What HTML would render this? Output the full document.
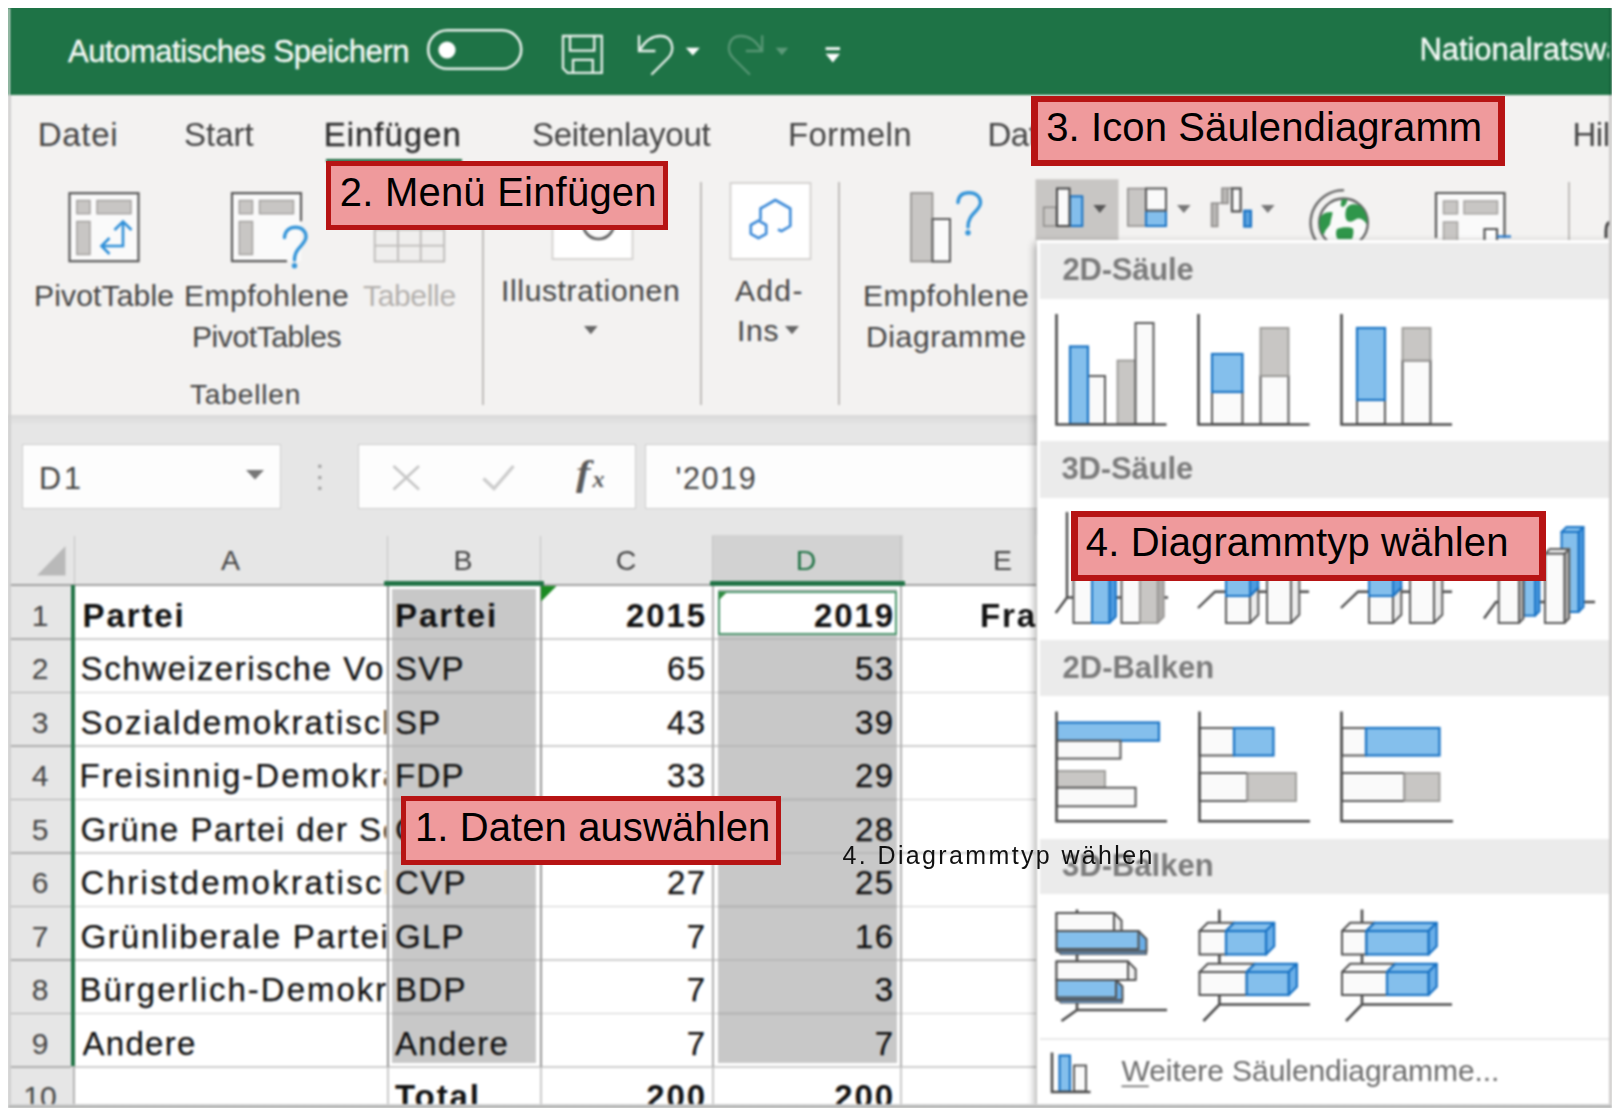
<!DOCTYPE html>
<html lang="de">
<head>
<meta charset="utf-8">
<title>Excel – Säulendiagramm einfügen</title>
<style>
html,body{margin:0;padding:0;background:#fff;}
body{width:1620px;height:1118px;overflow:hidden;position:relative;font-family:"Liberation Sans",sans-serif;}
#app{position:absolute;left:0;top:0;width:1612px;height:1108px;overflow:hidden;background:#f3f2f1;}
#shot{position:absolute;left:0;top:0;width:1612px;height:1108px;overflow:hidden;filter:blur(0.8px);}
.a{position:absolute;}
.t{position:absolute;white-space:nowrap;z-index:5;font-family:"Liberation Sans",sans-serif;}
svg{position:absolute;overflow:visible;}
.hl{position:absolute;left:10px;width:1026px;height:1px;background:#d6d6d6;}
.vl{position:absolute;width:1px;background:#d6d6d6;}
.rbox{position:absolute;box-sizing:border-box;background:#ef9a9c;border-style:solid;border-color:#b71414;z-index:20;}
.ph{position:absolute;left:1040px;width:569px;background:#ebebeb;z-index:11;}
</style>
</head>
<body>
<div id="app">
<div id="shot">

<!-- ===== title bar ===== -->
<div class="a" style="left:0;top:0;width:1612px;height:94.7px;background:#1e7346;"></div>
<svg style="left:0;top:0" width="1611" height="95" fill="none" stroke="#e9f1ec" stroke-width="2.3" stroke-linejoin="round" stroke-linecap="round">
<!-- autosave toggle -->
<rect x="428.2" y="30.2" width="93" height="38.6" rx="19.3" stroke-width="2.6"/>
<circle cx="447" cy="50" r="8.6" fill="#fff" stroke="none"/>
<!-- save -->
<path d="M563 36H601.8V72.8H567.5L563 68.3Z" stroke-linejoin="miter"/>
<path d="M570 36V50.6H594.3V36" stroke-linejoin="miter"/>
<path d="M573 72.8V59.8H592.8V72.8" stroke-linejoin="miter"/>
<!-- undo -->
<path d="M639 35.2V51H655.4" stroke-linejoin="miter" stroke-linecap="butt"/>
<path d="M640 50C645 41 652 36 660.5 36C672.5 36 676 50 667.5 58.5L652 74"/>
<path d="M685.8 47.7H699.8L692.8 55.4Z" fill="#fff" stroke="none"/>
<!-- redo (disabled) -->
<g opacity="0.28">
<path d="M762.2 35.2V51H745.8" stroke-linejoin="miter" stroke-linecap="butt"/>
<path d="M761.2 50C756.2 41 749.2 36 740.7 36C728.7 36 725.2 50 733.7 58.5L749.2 74"/>
<path d="M775.6 47.7H788.2L781.9 55.2Z" fill="#fff" stroke="none"/>
</g>
<!-- customize QAT -->
<path d="M825.6 47.3H840V50H825.6Z M825.6 53.8H840L832.8 62.6Z" fill="#fff" stroke="none"/>
</svg>

<!-- ===== ribbon ===== -->
<div class="a" style="left:0;top:94.7px;width:1612px;height:321px;background:#f3f2f1;"></div>
<!-- active tab underline -->
<div class="a" style="left:326px;top:159.2px;width:136px;height:3px;background:#1e6b41;"></div>
<!-- group separators -->
<div class="a" style="left:482px;top:182px;width:1.5px;height:223px;background:#bfbdbb;"></div>
<div class="a" style="left:700px;top:182px;width:1.5px;height:223px;background:#bfbdbb;"></div>
<div class="a" style="left:838px;top:182px;width:1.5px;height:223px;background:#bfbdbb;"></div>
<div class="a" style="left:1568px;top:182px;width:1.5px;height:60px;background:#bfbdbb;"></div>
<svg style="left:0;top:0" width="1611" height="420" fill="none"><rect x="69.5" y="193.2" width="69" height="68" fill="#fafafa" stroke="#595959" stroke-width="2.2"/><rect x="76.8" y="200.5" width="13.2" height="13.2" fill="#c8c6c4" stroke="#a19f9d" stroke-width="1.4"/><rect x="97.0" y="200.5" width="34" height="13.2" fill="#c8c6c4" stroke="#a19f9d" stroke-width="1.4"/><rect x="76.8" y="221.5" width="13.2" height="33" fill="#c8c6c4" stroke="#a19f9d" stroke-width="1.4"/><path d="M123 222.5V246H101.5 M114.5 230L123 221.5L131.5 230 M109.5 238L101.5 246L109.5 254" stroke="#2f8fd8" stroke-width="2.6" fill="none"/><rect x="232" y="193.2" width="69" height="68" fill="#fafafa"/><path d="M301 221.2V193.2H232V261.2H287" fill="none" stroke="#595959" stroke-width="2.2"/><rect x="239.3" y="200.5" width="13.2" height="13.2" fill="#c8c6c4" stroke="#a19f9d" stroke-width="1.4"/><rect x="259.5" y="200.5" width="34" height="13.2" fill="#c8c6c4" stroke="#a19f9d" stroke-width="1.4"/><rect x="239.3" y="221.5" width="13.2" height="33" fill="#c8c6c4" stroke="#a19f9d" stroke-width="1.4"/><path d="M284.5 237.5C285 230.5 289.5 227.3 295.5 227.3C302 227.3 306 231.3 306 236.8C306 245 294.5 247 294.5 260" stroke="#3595d9" stroke-width="3.4" fill="none" stroke-linecap="round"/><circle cx="294.5" cy="265.8" r="2.7" fill="#3595d9"/><rect x="374.7" y="200" width="69.5" height="61.5" fill="#efeeed" stroke="#bebcba" stroke-width="1.9"/><path d="M374.7 245.6H444.2 M374.7 229.5H444.2 M398 200V261.5 M420.7 200V261.5" stroke="#bebcba" stroke-width="1.9"/><rect x="552.5" y="183" width="80" height="76" fill="#fff" stroke="#d2d0ce" stroke-width="1.8"/><circle cx="598.5" cy="223.5" r="15.5" stroke="#5c5c5c" stroke-width="2.6" fill="#fafafa"/><rect x="730.5" y="183" width="80" height="76" fill="#fff" stroke="#d2d0ce" stroke-width="1.8"/><path d="M760.5 220V208.5L775.3 200L790.3 208.5V226L781.5 231.2L778 229.5" stroke="#3c8ad8" stroke-width="2.6" stroke-linejoin="round"/><path d="M758.5 220.6L766.2 225V233.8L758.5 238.2L750.8 233.8V225Z" stroke="#3c8ad8" stroke-width="2.6" stroke-linejoin="round"/><rect x="911" y="193" width="21.5" height="68.5" fill="#c8c6c4" stroke="#8f8d8b" stroke-width="1.6"/><rect x="932.5" y="219" width="17.5" height="42.5" fill="#fafafa" stroke="#595959" stroke-width="2"/><path d="M958 202.5C958.5 195.5 963 192.8 969 192.8C976 192.8 980.5 196.8 980.5 202.5C980.5 211 968 213 968 227" stroke="#3595d9" stroke-width="3.4" fill="none" stroke-linecap="round"/><circle cx="968" cy="232.8" r="2.7" fill="#3595d9"/><rect x="1035.5" y="179.3" width="83" height="61" fill="#c8c6c4"/><rect x="1043.7" y="207.3" width="12.5" height="18.7" fill="#c8c6c4" stroke="#8f8d8b" stroke-width="1.5"/><rect x="1070" y="196.3" width="12.3" height="29.7" fill="#83beec" stroke="#1a73c4" stroke-width="2"/><rect x="1057" y="188.5" width="12.5" height="37.5" fill="#fafafa" stroke="#444" stroke-width="2"/><path d="M1093.3 205H1106.3L1099.8 213Z" fill="#555"/><rect x="1127.8" y="188.5" width="18" height="37.5" fill="#c8c6c4" stroke="#8f8d8b" stroke-width="1.5"/><rect x="1146" y="210.5" width="20" height="15.5" fill="#83beec" stroke="#1a73c4" stroke-width="2"/><rect x="1146" y="188.5" width="20" height="22" fill="#fafafa" stroke="#555" stroke-width="2"/><path d="M1177 205H1190.6L1183.8 213Z" fill="#777"/><rect x="1211.6" y="203.2" width="6" height="23.2" fill="#b9b7b5" stroke="#8f8d8b" stroke-width="1.6"/><rect x="1222" y="188.2" width="6" height="15.2" fill="#b9b7b5" stroke="#8f8d8b" stroke-width="1.6"/><path d="M1217.6 203.3H1222 M1228 188.2H1232" stroke="#8f8d8b" stroke-width="1.6"/><rect x="1232" y="188.4" width="8.6" height="23" fill="#fafafa" stroke="#555" stroke-width="2.3"/><rect x="1244.3" y="210.8" width="6.6" height="15.7" fill="#5ba3e0" stroke="#1a73c4" stroke-width="2.3"/><path d="M1261 205H1274.6L1267.8 213Z" fill="#777"/><path d="M1343 190.2A32.6 32.6 0 0 0 1315.5 240" stroke="#6f6f6f" stroke-width="2.6" fill="none" stroke-linecap="round"/>
<circle cx="1343.5" cy="222.8" r="24.3" fill="#fafafa" stroke="#666" stroke-width="2.4"/>
<g fill="#2f964a">
<path d="M1341.5 199.6L1347.6 199.2L1346.2 204L1343.4 207L1340.6 206Z"/>
<path d="M1346 210C1347 205 1352 203.5 1357 204.6C1362 206 1366 212 1367.2 219L1366.8 224.5C1364 219.5 1360 217.8 1357 218.8C1354 220.2 1352 222.2 1349 221.6C1345.5 221 1344.6 215 1346 210Z"/>
<path d="M1323 214.2C1326 212.2 1331 211.6 1332.6 212.6C1332.2 216 1330.6 220 1330.2 224C1329.2 227 1325.4 229 1324.6 233L1322.6 235C1319.4 229 1318.8 222 1320.2 217Z"/>
<path d="M1337 229C1342 226.6 1350 226.6 1353 228.6C1354 232 1353.2 236 1352 239L1337.5 239C1335.6 236 1335.6 231.5 1337 229Z"/>
</g>
<path d="M1436 238V193H1504.5V238" fill="#fafafa" stroke="#555" stroke-width="2.2"/><rect x="1443.5" y="201" width="14" height="12.8" fill="#c8c6c4" stroke="#a19f9d" stroke-width="1.4"/><rect x="1464" y="201" width="33.5" height="12.8" fill="#c8c6c4" stroke="#a19f9d" stroke-width="1.4"/><rect x="1443.5" y="222" width="14" height="20" fill="#c8c6c4" stroke="#a19f9d" stroke-width="1.4"/><path d="M1484.5 240V229H1497V240" fill="#fff" stroke="#555" stroke-width="2.2"/><path d="M1497 236.5H1511" stroke="#2f7fd0" stroke-width="2.4"/><path d="M1611 222C1606.5 222 1606 226 1606 231V238" stroke="#444" stroke-width="3" fill="none"/></svg>

<!-- ribbon bottom shadow + formula bar background -->
<div class="a" style="left:0;top:415px;width:1612px;height:120px;background:#e6e6e6;"></div>
<div class="a" style="left:0;top:415px;width:1612px;height:10px;background:linear-gradient(#d9d9d9,#e6e6e6);"></div>

<!-- name box -->
<div class="a" style="left:22px;top:444px;width:259px;height:65px;box-sizing:border-box;background:#fdfdfd;border:1.5px solid #cdcdcd;"></div>
<!-- buttons box -->
<div class="a" style="left:358px;top:444px;width:278px;height:65px;box-sizing:border-box;background:#fdfdfd;border:1.5px solid #cdcdcd;"></div>
<!-- formula input -->
<div class="a" style="left:645px;top:444px;width:400px;height:65px;box-sizing:border-box;background:#fdfdfd;border:1.5px solid #cdcdcd;"></div>
<svg style="left:0;top:420" width="1040" height="115" fill="none"><path d="M246 50H264L255 59.5Z" fill="#777"/><rect x="318.2" y="44.7" width="3.2" height="3.2" fill="#a2a2a2"/><rect x="318.2" y="56.000000000000014" width="3.2" height="3.2" fill="#a2a2a2"/><rect x="318.2" y="66.7" width="3.2" height="3.2" fill="#a2a2a2"/><path d="M393.5 46L419 69.5 M419 46L393.5 69.5" stroke="#c6c6c6" stroke-width="2.6"/><path d="M483.5 58.5L494 68.5L513.5 46" stroke="#cdcdcd" stroke-width="3.4"/></svg><svg style="left:0;top:300" width="900" height="60"><path d="M584 26H597.6L590.8 34.2Z M785 26H799L792 34.2Z" fill="#666"/></svg>

<!-- ===== sheet ===== -->
<div class="a" style="left:0;top:535px;width:1036px;height:573px;background:#fff;"></div>
<!-- column header strip -->
<div class="a" style="left:0;top:535px;width:1036px;height:50px;background:#e6e6e6;"></div>
<!-- selected D header -->
<div class="a" style="left:712px;top:535px;width:190.5px;height:48px;background:#d2d2d2;"></div>
<!-- row header strip -->
<div class="a" style="left:0;top:585px;width:73.5px;height:523px;background:#e6e6e6;"></div>
<div class="a" style="left:10px;top:584px;width:1026px;height:2.2px;background:#a2a2a2;"></div>
<div class="a" style="left:74px;top:536px;width:1px;height:48px;background:#c2c2c2;"></div>
<div class="a" style="left:387px;top:536px;width:1px;height:48px;background:#c2c2c2;"></div>
<div class="a" style="left:540px;top:536px;width:1px;height:48px;background:#c2c2c2;"></div>
<div class="a" style="left:712px;top:536px;width:1px;height:48px;background:#c2c2c2;"></div>
<div class="a" style="left:900px;top:536px;width:1px;height:48px;background:#c2c2c2;"></div>
<div class="a" style="left:71px;top:638.0px;width:965px;height:1.6px;background:#cecece;"></div>
<div class="a" style="left:10px;top:638.0px;width:61px;height:1.8px;background:#adadad;"></div>
<div class="a" style="left:71px;top:691.5px;width:965px;height:1.6px;background:#cecece;"></div>
<div class="a" style="left:10px;top:691.5px;width:61px;height:1.8px;background:#adadad;"></div>
<div class="a" style="left:71px;top:745.0px;width:965px;height:1.6px;background:#cecece;"></div>
<div class="a" style="left:10px;top:745.0px;width:61px;height:1.8px;background:#adadad;"></div>
<div class="a" style="left:71px;top:798.5px;width:965px;height:1.6px;background:#cecece;"></div>
<div class="a" style="left:10px;top:798.5px;width:61px;height:1.8px;background:#adadad;"></div>
<div class="a" style="left:71px;top:852.0px;width:965px;height:1.6px;background:#cecece;"></div>
<div class="a" style="left:10px;top:852.0px;width:61px;height:1.8px;background:#adadad;"></div>
<div class="a" style="left:71px;top:905.5px;width:965px;height:1.6px;background:#cecece;"></div>
<div class="a" style="left:10px;top:905.5px;width:61px;height:1.8px;background:#adadad;"></div>
<div class="a" style="left:71px;top:959.0px;width:965px;height:1.6px;background:#cecece;"></div>
<div class="a" style="left:10px;top:959.0px;width:61px;height:1.8px;background:#adadad;"></div>
<div class="a" style="left:71px;top:1012.5px;width:965px;height:1.6px;background:#cecece;"></div>
<div class="a" style="left:10px;top:1012.5px;width:61px;height:1.8px;background:#adadad;"></div>
<div class="a" style="left:71px;top:1066.0px;width:965px;height:1.6px;background:#cecece;"></div>
<div class="a" style="left:10px;top:1066.0px;width:61px;height:1.8px;background:#adadad;"></div>
<div class="a" style="left:387px;top:586px;width:1.6px;height:522px;background:#cacaca;"></div>
<div class="a" style="left:540px;top:586px;width:1.6px;height:522px;background:#cacaca;"></div>
<div class="a" style="left:712px;top:586px;width:1.6px;height:522px;background:#cacaca;"></div>
<div class="a" style="left:900px;top:586px;width:1.6px;height:522px;background:#cacaca;"></div>
<div class="a" style="left:387px;top:586px;width:1.7px;height:481px;background:#969696;"></div>
<div class="a" style="left:540px;top:586px;width:1.7px;height:481px;background:#969696;"></div>
<div class="a" style="left:712px;top:586px;width:1.7px;height:481px;background:#b0b0b0;"></div>
<div class="a" style="left:900px;top:586px;width:1.7px;height:481px;background:#b0b0b0;"></div>
<div class="a" style="left:392px;top:589px;width:143.5px;height:474px;background:#c8c8c8;"></div>
<div class="a" style="left:717.5px;top:589px;width:179.5px;height:474px;background:#c8c8c8;"></div>
<div class="a" style="left:392px;top:637.5px;width:143.5px;height:2.5px;background:#b9b9b9;"></div>
<div class="a" style="left:717.5px;top:637.5px;width:179.5px;height:2.5px;background:#b9b9b9;"></div>
<div class="a" style="left:392px;top:691.0px;width:143.5px;height:2.5px;background:#b9b9b9;"></div>
<div class="a" style="left:717.5px;top:691.0px;width:179.5px;height:2.5px;background:#b9b9b9;"></div>
<div class="a" style="left:392px;top:744.5px;width:143.5px;height:2.5px;background:#b9b9b9;"></div>
<div class="a" style="left:717.5px;top:744.5px;width:179.5px;height:2.5px;background:#b9b9b9;"></div>
<div class="a" style="left:392px;top:798.0px;width:143.5px;height:2.5px;background:#b9b9b9;"></div>
<div class="a" style="left:717.5px;top:798.0px;width:179.5px;height:2.5px;background:#b9b9b9;"></div>
<div class="a" style="left:392px;top:851.5px;width:143.5px;height:2.5px;background:#b9b9b9;"></div>
<div class="a" style="left:717.5px;top:851.5px;width:179.5px;height:2.5px;background:#b9b9b9;"></div>
<div class="a" style="left:392px;top:905.0px;width:143.5px;height:2.5px;background:#b9b9b9;"></div>
<div class="a" style="left:717.5px;top:905.0px;width:179.5px;height:2.5px;background:#b9b9b9;"></div>
<div class="a" style="left:392px;top:958.5px;width:143.5px;height:2.5px;background:#b9b9b9;"></div>
<div class="a" style="left:717.5px;top:958.5px;width:179.5px;height:2.5px;background:#b9b9b9;"></div>
<div class="a" style="left:392px;top:1012.0px;width:143.5px;height:2.5px;background:#b9b9b9;"></div>
<div class="a" style="left:717.5px;top:1012.0px;width:179.5px;height:2.5px;background:#b9b9b9;"></div>
<div class="a" style="left:717.5px;top:590.5px;width:179.5px;height:44.5px;box-sizing:border-box;background:#fff;border:2px solid #4b966c;"></div>
<svg style="left:719px;top:592px" width="9" height="9"><path d="M0 0H8L0 8Z" fill="#2e8b3e"/></svg>
<svg style="left:541px;top:586px" width="16" height="16"><path d="M0 0H15.5L0 15.5Z" fill="#1a8a22"/></svg>
<div class="a" style="left:384px;top:581px;width:160px;height:5px;background:#217346;border-radius:1px;"></div>
<div class="a" style="left:709.5px;top:581px;width:195.5px;height:5px;background:#217346;border-radius:1px;"></div>
<div class="a" style="left:71px;top:584.5px;width:4px;height:481.5px;background:#217346;"></div>
<div class="a" style="left:73px;top:1066px;width:1.5px;height:42px;background:#b3b3b3;"></div>
<svg style="left:37px;top:546px" width="30" height="31"><path d="M28.5 0V29.5H0Z" fill="#b9b9b9"/></svg>


<!-- ===== dropdown panel ===== -->
<div class="a" style="left:1036.5px;top:240px;width:576px;height:870px;background:#fff;z-index:10;box-shadow:-2px 3px 8px 0 rgba(0,0,0,0.33);"></div>
<div class="ph" style="top:243.3px;height:55.7px;"></div>
<div class="ph" style="top:441px;height:56.5px;"></div>
<div class="ph" style="top:640px;height:55.5px;"></div>
<div class="ph" style="top:838.5px;height:55.5px;"></div>
<div class="a" style="left:1040px;top:1038px;width:569px;height:1.5px;background:#e9e9e9;z-index:11;"></div>

<svg style="left:0;top:0;z-index:12" width="1611" height="1108" fill="none"><rect x="1117.5" y="360.5" width="18.0" height="63.5" fill="#c8c6c4" stroke="#9a9896" stroke-width="1.8"/><rect x="1135.5" y="323.0" width="18.0" height="101.0" fill="#fafafa" stroke="#595959" stroke-width="2"/><rect x="1088.0" y="376.0" width="17.0" height="48.0" fill="#fafafa" stroke="#595959" stroke-width="2"/><rect x="1070.0" y="346.5" width="18.0" height="77.5" fill="#84bfec" stroke="#1a73c4" stroke-width="2.2"/><path d="M1056.5 314V424.5H1166.5" stroke="#4c4c4c" stroke-width="2.6"/><rect x="1212.0" y="392.0" width="30.5" height="32.0" fill="#fafafa" stroke="#595959" stroke-width="2"/><rect x="1212.0" y="354.0" width="30.5" height="38.0" fill="#84bfec" stroke="#1a73c4" stroke-width="2.2"/><rect x="1260.5" y="376.0" width="28.0" height="48.0" fill="#fafafa" stroke="#595959" stroke-width="2"/><rect x="1260.5" y="328.0" width="28.0" height="48.0" fill="#c8c6c4" stroke="#9a9896" stroke-width="1.8"/><path d="M1198.5 314V424.5H1309.5" stroke="#4c4c4c" stroke-width="2.6"/><rect x="1357.0" y="400.0" width="28.0" height="24.0" fill="#fafafa" stroke="#595959" stroke-width="2"/><rect x="1357.0" y="328.0" width="28.0" height="72.0" fill="#84bfec" stroke="#1a73c4" stroke-width="2.2"/><rect x="1402.5" y="360.5" width="28.0" height="63.5" fill="#fafafa" stroke="#595959" stroke-width="2"/><rect x="1402.5" y="328.0" width="28.0" height="32.5" fill="#c8c6c4" stroke="#9a9896" stroke-width="1.8"/><path d="M1341.5 314V424.5H1452" stroke="#4c4c4c" stroke-width="2.6"/><rect x="1074.0" y="1065.5" width="12.0" height="26.0" fill="#fafafa" stroke="#595959" stroke-width="2"/><rect x="1059.5" y="1055.5" width="10.5" height="36.0" fill="#84bfec" stroke="#1a73c4" stroke-width="2.2"/><path d="M1052 1052.5V1092H1090.5" stroke="#4c4c4c" stroke-width="2.6"/><path d="M1121.5 1086.3H1148.8" stroke="#6b6b6b" stroke-width="1.6"/><path d="M1067 512V597.5L1055.7 613 M1067 597.5H1168" stroke="#4c4c4c" stroke-width="2.4"/><path d="M1092 545L1092 545V623L1092 623Z" fill="#ececec" stroke="#595959" stroke-width="2" stroke-linejoin="round"/><path d="M1073.5 545L1073.5 545H1092L1092 545Z" fill="#fafafa" stroke="#595959" stroke-width="2" stroke-linejoin="round"/><rect x="1073.5" y="545.0" width="18.5" height="78.0" fill="#fafafa" stroke="#595959" stroke-width="2"/><path d="M1109.4 535L1115.9 528.5V616.5L1109.4 623Z" fill="#4d9be0" stroke="#1a73c4" stroke-width="2" stroke-linejoin="round"/><path d="M1092 535L1098.5 528.5H1115.9L1109.4 535Z" fill="#84bfec" stroke="#1a73c4" stroke-width="2" stroke-linejoin="round"/><rect x="1092.0" y="535.0" width="17.4" height="88.0" fill="#84bfec" stroke="#1a73c4" stroke-width="2"/><path d="M1140 545L1140 545V623L1140 623Z" fill="#ececec" stroke="#595959" stroke-width="2" stroke-linejoin="round"/><path d="M1121.5 545L1121.5 545H1140L1140 545Z" fill="#fafafa" stroke="#595959" stroke-width="2" stroke-linejoin="round"/><rect x="1121.5" y="545.0" width="18.5" height="78.0" fill="#fafafa" stroke="#595959" stroke-width="2"/><path d="M1157.6 560L1163.8 553.8V616.8L1157.6 623Z" fill="#aeacaa" stroke="#9a9896" stroke-width="1.8" stroke-linejoin="round"/><path d="M1140 560L1146.2 553.8H1163.8L1157.6 560Z" fill="#c8c6c4" stroke="#9a9896" stroke-width="1.8" stroke-linejoin="round"/><rect x="1140.0" y="560.0" width="17.6" height="63.0" fill="#c8c6c4" stroke="#9a9896" stroke-width="1.8"/><path d="M1198 608L1215 591.7H1309" stroke="#4c4c4c" stroke-width="2.4"/><path d="M1250 596L1258.3 587.7V614.7L1250 623Z" fill="#ececec" stroke="#595959" stroke-width="2" stroke-linejoin="round"/><path d="M1226 596L1234.3 587.7H1258.3L1250 596Z" fill="#fafafa" stroke="#595959" stroke-width="2" stroke-linejoin="round"/><rect x="1226.0" y="596.0" width="24.0" height="27.0" fill="#fafafa" stroke="#595959" stroke-width="2"/><path d="M1250 560L1258.3 551.7V587.7L1250 596Z" fill="#4d9be0" stroke="#1a73c4" stroke-width="2" stroke-linejoin="round"/><path d="M1226 560L1234.3 551.7H1258.3L1250 560Z" fill="#84bfec" stroke="#1a73c4" stroke-width="2" stroke-linejoin="round"/><rect x="1226.0" y="560.0" width="24.0" height="36.0" fill="#84bfec" stroke="#1a73c4" stroke-width="2"/><path d="M1291 550L1299.3 541.7V614.7L1291 623Z" fill="#ececec" stroke="#595959" stroke-width="2" stroke-linejoin="round"/><path d="M1267 550L1275.3 541.7H1299.3L1291 550Z" fill="#fafafa" stroke="#595959" stroke-width="2" stroke-linejoin="round"/><rect x="1267.0" y="550.0" width="24.0" height="73.0" fill="#fafafa" stroke="#595959" stroke-width="2"/><path d="M1341 608L1358 591.7H1452" stroke="#4c4c4c" stroke-width="2.4"/><path d="M1393 596L1401.3 587.7V614.7L1393 623Z" fill="#ececec" stroke="#595959" stroke-width="2" stroke-linejoin="round"/><path d="M1369 596L1377.3 587.7H1401.3L1393 596Z" fill="#fafafa" stroke="#595959" stroke-width="2" stroke-linejoin="round"/><rect x="1369.0" y="596.0" width="24.0" height="27.0" fill="#fafafa" stroke="#595959" stroke-width="2"/><path d="M1393 560L1401.3 551.7V587.7L1393 596Z" fill="#4d9be0" stroke="#1a73c4" stroke-width="2" stroke-linejoin="round"/><path d="M1369 560L1377.3 551.7H1401.3L1393 560Z" fill="#84bfec" stroke="#1a73c4" stroke-width="2" stroke-linejoin="round"/><rect x="1369.0" y="560.0" width="24.0" height="36.0" fill="#84bfec" stroke="#1a73c4" stroke-width="2"/><path d="M1434 550L1442.3 541.7V614.7L1434 623Z" fill="#ececec" stroke="#595959" stroke-width="2" stroke-linejoin="round"/><path d="M1410 550L1418.3 541.7H1442.3L1434 550Z" fill="#fafafa" stroke="#595959" stroke-width="2" stroke-linejoin="round"/><rect x="1410.0" y="550.0" width="24.0" height="73.0" fill="#fafafa" stroke="#595959" stroke-width="2"/><path d="M1484 618.5L1496 602H1595" stroke="#4c4c4c" stroke-width="2.4"/><path d="M1535 560L1539.4 555.6V611.3000000000001L1535 615.7Z" fill="#4d9be0" stroke="#1a73c4" stroke-width="2" stroke-linejoin="round"/><path d="M1523.7 560L1528.1000000000001 555.6H1539.4L1535 560Z" fill="#84bfec" stroke="#1a73c4" stroke-width="2" stroke-linejoin="round"/><rect x="1523.7" y="560.0" width="11.3" height="55.7" fill="#84bfec" stroke="#1a73c4" stroke-width="2"/><path d="M1519 545L1523.4 540.6V618.6L1519 623Z" fill="#bdbbb9" stroke="#595959" stroke-width="2" stroke-linejoin="round"/><path d="M1498.7 545L1503.1000000000001 540.6H1523.4L1519 545Z" fill="#fafafa" stroke="#595959" stroke-width="2" stroke-linejoin="round"/><rect x="1498.7" y="545.0" width="20.3" height="78.0" fill="#fafafa" stroke="#595959" stroke-width="2"/><path d="M1578.5 532L1583.5 527V607L1578.5 612Z" fill="#4d9be0" stroke="#1a73c4" stroke-width="2" stroke-linejoin="round"/><path d="M1561.5 532L1566.5 527H1583.5L1578.5 532Z" fill="#84bfec" stroke="#1a73c4" stroke-width="2" stroke-linejoin="round"/><rect x="1561.5" y="532.0" width="17.0" height="80.0" fill="#84bfec" stroke="#1a73c4" stroke-width="2"/><path d="M1564.4 553.7L1569.2 548.9000000000001V618.2L1564.4 623Z" fill="#bdbbb9" stroke="#595959" stroke-width="2" stroke-linejoin="round"/><path d="M1545 553.7L1549.8 548.9000000000001H1569.2L1564.4 553.7Z" fill="#fafafa" stroke="#595959" stroke-width="2" stroke-linejoin="round"/><rect x="1545.0" y="553.7" width="19.4" height="69.3" fill="#fafafa" stroke="#595959" stroke-width="2"/><rect x="1057.0" y="722.5" width="102.0" height="18.2" fill="#84bfec" stroke="#1a73c4" stroke-width="2.2"/><rect x="1057.0" y="740.7" width="63.5" height="17.9" fill="#fafafa" stroke="#595959" stroke-width="2"/><rect x="1057.0" y="771.0" width="48.0" height="16.7" fill="#c8c6c4" stroke="#9a9896" stroke-width="1.8"/><rect x="1057.0" y="787.7" width="78.6" height="18.6" fill="#fafafa" stroke="#595959" stroke-width="2"/><path d="M1056.5 711.5V821.3H1167" stroke="#4c4c4c" stroke-width="2.6"/><rect x="1199.5" y="728.0" width="34.5" height="27.5" fill="#fafafa" stroke="#595959" stroke-width="2"/><rect x="1234.0" y="728.0" width="39.5" height="27.5" fill="#84bfec" stroke="#1a73c4" stroke-width="2.2"/><rect x="1199.5" y="773.0" width="48.0" height="28.0" fill="#fafafa" stroke="#595959" stroke-width="2"/><rect x="1247.5" y="773.0" width="48.5" height="28.0" fill="#c8c6c4" stroke="#9a9896" stroke-width="1.8"/><path d="M1199.5 711.5V821.3H1310" stroke="#4c4c4c" stroke-width="2.6"/><rect x="1342.0" y="728.0" width="24.0" height="27.5" fill="#fafafa" stroke="#595959" stroke-width="2"/><rect x="1366.0" y="728.0" width="73.5" height="27.5" fill="#84bfec" stroke="#1a73c4" stroke-width="2.2"/><rect x="1342.0" y="773.0" width="62.5" height="28.0" fill="#fafafa" stroke="#595959" stroke-width="2"/><rect x="1404.5" y="773.0" width="35.0" height="28.0" fill="#c8c6c4" stroke="#9a9896" stroke-width="1.8"/><path d="M1341.5 711.5V821.3H1453" stroke="#4c4c4c" stroke-width="2.6"/><path d="M1077 909.5V1010H1167 M1077 1010L1061.5 1021" stroke="#4c4c4c" stroke-width="2.6"/><path d="M1056.5 913H1114L1121.5 920.5V931H1056.5Z" fill="#f0f0f0" stroke="#505050" stroke-width="2" stroke-linejoin="round"/><rect x="1056.5" y="913" width="57.5" height="18" fill="#fafafa" stroke="#505050" stroke-width="2"/><path d="M1056.5 949L1060.5 954.5H1146.5V946Z" fill="#6a9fd4" stroke="#505050" stroke-width="1.2" stroke-linejoin="round"/><path d="M1056.5 931H1138.5L1146.5 939V951.5H1056.5Z" fill="#6aaee8" stroke="#505050" stroke-width="2" stroke-linejoin="round"/><rect x="1056.5" y="931" width="82.0" height="18" fill="#84bfec" stroke="#505050" stroke-width="2"/><path d="M1056.5 961.5H1128L1135.7 969.2V980H1056.5Z" fill="#f0f0f0" stroke="#505050" stroke-width="2" stroke-linejoin="round"/><rect x="1056.5" y="961.5" width="71.5" height="18.5" fill="#fafafa" stroke="#505050" stroke-width="2"/><path d="M1056.5 997.5L1060.5 1003.0H1122.5V994.5Z" fill="#6a9fd4" stroke="#505050" stroke-width="1.2" stroke-linejoin="round"/><path d="M1056.5 980H1116L1122.5 986.5V1000.0H1056.5Z" fill="#6aaee8" stroke="#505050" stroke-width="2" stroke-linejoin="round"/><rect x="1056.5" y="980" width="59.5" height="17.5" fill="#84bfec" stroke="#505050" stroke-width="2"/><path d="M1219.4 909.5V1004.5H1310 M1219.4 1004.5L1203.4 1021" stroke="#4c4c4c" stroke-width="2.6"/><path d="M1199.5 931L1207.7 922.8H1234.2L1226 931Z" fill="#fafafa" stroke="#505050" stroke-width="2" stroke-linejoin="round"/><path d="M1226 931L1234.2 922.8V946.3L1226 954.5Z" fill="#f0f0f0" stroke="#505050" stroke-width="2" stroke-linejoin="round"/><rect x="1199.5" y="931" width="26.5" height="23.5" fill="#fafafa" stroke="#505050" stroke-width="2"/><path d="M1226 931L1234.2 922.8H1274.2L1266 931Z" fill="#84bfec" stroke="#1a73c4" stroke-width="2.2" stroke-linejoin="round"/><path d="M1266 931L1274.2 922.8V946.3L1266 954.5Z" fill="#6aaee8" stroke="#1a73c4" stroke-width="2.2" stroke-linejoin="round"/><rect x="1226" y="931" width="40" height="23.5" fill="#84bfec" stroke="#1a73c4" stroke-width="2.2"/><path d="M1199.5 972L1207.7 963.8H1254.9L1246.7 972Z" fill="#fafafa" stroke="#505050" stroke-width="2" stroke-linejoin="round"/><path d="M1246.7 972L1254.9 963.8V986.8L1246.7 995Z" fill="#f0f0f0" stroke="#505050" stroke-width="2" stroke-linejoin="round"/><rect x="1199.5" y="972" width="47.200000000000045" height="23" fill="#fafafa" stroke="#505050" stroke-width="2"/><path d="M1246.7 972L1254.9 963.8H1296.9L1288.7 972Z" fill="#84bfec" stroke="#1a73c4" stroke-width="2.2" stroke-linejoin="round"/><path d="M1288.7 972L1296.9 963.8V986.8L1288.7 995Z" fill="#6aaee8" stroke="#1a73c4" stroke-width="2.2" stroke-linejoin="round"/><rect x="1246.7" y="972" width="42.0" height="23" fill="#84bfec" stroke="#1a73c4" stroke-width="2.2"/><path d="M1362 909.5V1004.5H1452 M1362 1004.5L1346 1021" stroke="#4c4c4c" stroke-width="2.6"/><path d="M1342 931L1350.2 922.8H1374.6000000000001L1366.4 931Z" fill="#fafafa" stroke="#505050" stroke-width="2" stroke-linejoin="round"/><path d="M1366.4 931L1374.6000000000001 922.8V946.3L1366.4 954.5Z" fill="#f0f0f0" stroke="#505050" stroke-width="2" stroke-linejoin="round"/><rect x="1342" y="931" width="24.40000000000009" height="23.5" fill="#fafafa" stroke="#505050" stroke-width="2"/><path d="M1366.4 931L1374.6000000000001 922.8H1436.7L1428.5 931Z" fill="#84bfec" stroke="#1a73c4" stroke-width="2.2" stroke-linejoin="round"/><path d="M1428.5 931L1436.7 922.8V946.3L1428.5 954.5Z" fill="#6aaee8" stroke="#1a73c4" stroke-width="2.2" stroke-linejoin="round"/><rect x="1366.4" y="931" width="62.09999999999991" height="23.5" fill="#84bfec" stroke="#1a73c4" stroke-width="2.2"/><path d="M1342 972L1350.2 963.8H1395.2L1387 972Z" fill="#fafafa" stroke="#505050" stroke-width="2" stroke-linejoin="round"/><path d="M1387 972L1395.2 963.8V986.8L1387 995Z" fill="#f0f0f0" stroke="#505050" stroke-width="2" stroke-linejoin="round"/><rect x="1342" y="972" width="45" height="23" fill="#fafafa" stroke="#505050" stroke-width="2"/><path d="M1387 972L1395.2 963.8H1436.7L1428.5 972Z" fill="#84bfec" stroke="#1a73c4" stroke-width="2.2" stroke-linejoin="round"/><path d="M1428.5 972L1436.7 963.8V986.8L1428.5 995Z" fill="#6aaee8" stroke="#1a73c4" stroke-width="2.2" stroke-linejoin="round"/><rect x="1387" y="972" width="41.5" height="23" fill="#84bfec" stroke="#1a73c4" stroke-width="2.2"/></svg>

<span class="t" id="t0" style="top:35.76px;font-size:31px;line-height:31px;color:#f6faf7;letter-spacing:-0.455px;left:68.00px;-webkit-text-stroke:0.35px #f6faf7;">Automatisches Speichern</span>
<span class="t" id="t1" style="top:33.76px;font-size:31px;line-height:31px;color:#f6faf7;letter-spacing:-0.077px;left:1419.50px;-webkit-text-stroke:0.35px #f6faf7;">Nationalratswa</span>
<span class="t" id="t2" style="top:118.07px;font-size:33px;line-height:33px;color:#444;letter-spacing:0.725px;left:37.70px;">Datei</span>
<span class="t" id="t3" style="top:118.07px;font-size:33px;line-height:33px;color:#444;letter-spacing:-0.025px;left:184.00px;">Start</span>
<span class="t" id="t4" style="top:118.07px;font-size:33px;line-height:33px;color:#2b2b2b;letter-spacing:0.971px;left:323.70px;-webkit-text-stroke:0.3px #333;">Einfügen</span>
<span class="t" id="t5" style="top:118.07px;font-size:33px;line-height:33px;color:#444;letter-spacing:-0.273px;left:532.00px;">Seitenlayout</span>
<span class="t" id="t6" style="top:118.07px;font-size:33px;line-height:33px;color:#444;letter-spacing:0.417px;left:788.00px;">Formeln</span>
<span class="t" id="t7" style="top:118.07px;font-size:33px;line-height:33px;color:#444;letter-spacing:-0.500px;left:987.50px;">Daten</span>
<span class="t" id="t8" style="top:118.07px;font-size:33px;line-height:33px;color:#444;letter-spacing:-0.500px;left:1572.50px;">Hilfe</span>
<span class="t" id="t9" style="top:280.61px;font-size:30px;line-height:30px;color:#444;letter-spacing:0.167px;left:34.00px;">PivotTable</span>
<span class="t" id="t10" style="top:280.61px;font-size:30px;line-height:30px;color:#444;letter-spacing:0.500px;left:184.00px;">Empfohlene</span>
<span class="t" id="t11" style="top:321.61px;font-size:30px;line-height:30px;color:#444;letter-spacing:-0.400px;left:192.00px;">PivotTables</span>
<span class="t" id="t12" style="top:280.61px;font-size:30px;line-height:30px;color:#b3b0ad;letter-spacing:-0.333px;left:363.00px;">Tabelle</span>
<span class="t" id="t13" style="top:275.61px;font-size:30px;line-height:30px;color:#444;letter-spacing:0.654px;left:501.00px;">Illustrationen</span>
<span class="t" id="t14" style="top:275.61px;font-size:30px;line-height:30px;color:#444;letter-spacing:1.333px;left:735.00px;">Add-</span>
<span class="t" id="t15" style="top:315.61px;font-size:30px;line-height:30px;color:#444;letter-spacing:0.750px;left:737.00px;">Ins</span>
<span class="t" id="t16" style="top:280.61px;font-size:30px;line-height:30px;color:#444;letter-spacing:0.611px;left:863.00px;">Empfohlene</span>
<span class="t" id="t17" style="top:321.61px;font-size:30px;line-height:30px;color:#444;letter-spacing:0.625px;left:866.00px;">Diagramme</span>
<span class="t" id="t18" style="top:381.30px;font-size:28px;line-height:28px;color:#444;letter-spacing:0.857px;left:190.00px;">Tabellen</span>
<span class="t" id="t19" style="top:463.18px;font-size:30.5px;line-height:30.5px;color:#444;letter-spacing:3.000px;left:39.00px;">D1</span>
<span class="t" id="t20" style="top:463.18px;font-size:30.5px;line-height:30.5px;color:#444;letter-spacing:1.625px;left:675.50px;">&#x27;2019</span>
<span class="t" id="t21" style="top:455.03px;font-size:36px;line-height:36px;color:#5a5a5a;font-weight:bold;font-style:italic;font-family:'Liberation Serif',serif;left:576.00px;transform:scaleX(1.2);transform-origin:left;">f</span>
<span class="t" id="t22" style="top:467.18px;font-size:24px;line-height:24px;color:#5a5a5a;font-weight:bold;font-style:italic;font-family:'Liberation Serif',serif;left:592.50px;">x</span>
<span class="t" id="t23" style="top:545.87px;font-size:28.5px;line-height:28.5px;color:#444;left:80.50px;width:300px;text-align:center;">A</span>
<span class="t" id="t24" style="top:545.87px;font-size:28.5px;line-height:28.5px;color:#444;left:313.00px;width:300px;text-align:center;">B</span>
<span class="t" id="t25" style="top:545.87px;font-size:28.5px;line-height:28.5px;color:#444;left:476.00px;width:300px;text-align:center;">C</span>
<span class="t" id="t26" style="top:545.87px;font-size:28.5px;line-height:28.5px;color:#217346;left:656.00px;width:300px;text-align:center;">D</span>
<span class="t" id="t27" style="top:545.87px;font-size:28.5px;line-height:28.5px;color:#444;left:852.50px;width:300px;text-align:center;">E</span>
<span class="t" id="t28" style="top:600.61px;font-size:30px;line-height:30px;color:#444;left:-110.00px;width:300px;text-align:center;">1</span>
<span class="t" id="t29" style="top:654.11px;font-size:30px;line-height:30px;color:#444;left:-110.00px;width:300px;text-align:center;">2</span>
<span class="t" id="t30" style="top:707.61px;font-size:30px;line-height:30px;color:#444;left:-110.00px;width:300px;text-align:center;">3</span>
<span class="t" id="t31" style="top:761.11px;font-size:30px;line-height:30px;color:#444;left:-110.00px;width:300px;text-align:center;">4</span>
<span class="t" id="t32" style="top:814.61px;font-size:30px;line-height:30px;color:#444;left:-110.00px;width:300px;text-align:center;">5</span>
<span class="t" id="t33" style="top:868.11px;font-size:30px;line-height:30px;color:#444;left:-110.00px;width:300px;text-align:center;">6</span>
<span class="t" id="t34" style="top:921.61px;font-size:30px;line-height:30px;color:#444;left:-110.00px;width:300px;text-align:center;">7</span>
<span class="t" id="t35" style="top:975.11px;font-size:30px;line-height:30px;color:#444;left:-110.00px;width:300px;text-align:center;">8</span>
<span class="t" id="t36" style="top:1028.61px;font-size:30px;line-height:30px;color:#444;left:-110.00px;width:300px;text-align:center;">9</span>
<span class="t" id="t37" style="top:1082.11px;font-size:30px;line-height:30px;color:#444;left:-110.00px;width:300px;text-align:center;">10</span>
<span class="t" id="t38" style="top:598.57px;font-size:33px;line-height:33px;color:#111;font-weight:bold;letter-spacing:1.900px;left:82.50px;display:block;overflow:hidden;padding-bottom:12px;width:303.70px;">Partei</span>
<span class="t" id="t39" style="top:598.57px;font-size:33px;line-height:33px;color:#111;font-weight:bold;letter-spacing:1.900px;left:395.00px;">Partei</span>
<span class="t" id="t40" style="top:598.57px;font-size:33px;line-height:33px;color:#111;font-weight:bold;letter-spacing:1.900px;right:905.10px;">2015</span>
<span class="t" id="t41" style="top:598.57px;font-size:33px;line-height:33px;color:#111;font-weight:bold;letter-spacing:1.900px;right:717.10px;">2019</span>
<span class="t" id="t42" style="top:652.07px;font-size:33px;line-height:33px;color:#111;letter-spacing:1.625px;left:80.50px;display:block;overflow:hidden;padding-bottom:12px;width:305.70px;-webkit-text-stroke:0.25px #111;">Schweizerische Vo</span>
<span class="t" id="t43" style="top:652.07px;font-size:33px;line-height:33px;color:#111;letter-spacing:1.300px;left:395.00px;-webkit-text-stroke:0.25px #111;">SVP</span>
<span class="t" id="t44" style="top:652.07px;font-size:33px;line-height:33px;color:#111;letter-spacing:1.300px;right:905.70px;-webkit-text-stroke:0.25px #111;">65</span>
<span class="t" id="t45" style="top:652.07px;font-size:33px;line-height:33px;color:#111;letter-spacing:1.300px;right:717.70px;-webkit-text-stroke:0.25px #111;">53</span>
<span class="t" id="t46" style="top:705.57px;font-size:33px;line-height:33px;color:#111;letter-spacing:2.006px;left:80.50px;display:block;overflow:hidden;padding-bottom:12px;width:305.70px;-webkit-text-stroke:0.25px #111;">Sozialdemokratisch</span>
<span class="t" id="t47" style="top:705.57px;font-size:33px;line-height:33px;color:#111;letter-spacing:1.300px;left:395.00px;-webkit-text-stroke:0.25px #111;">SP</span>
<span class="t" id="t48" style="top:705.57px;font-size:33px;line-height:33px;color:#111;letter-spacing:1.300px;right:905.70px;-webkit-text-stroke:0.25px #111;">43</span>
<span class="t" id="t49" style="top:705.57px;font-size:33px;line-height:33px;color:#111;letter-spacing:1.300px;right:717.70px;-webkit-text-stroke:0.25px #111;">39</span>
<span class="t" id="t50" style="top:759.07px;font-size:33px;line-height:33px;color:#111;letter-spacing:1.981px;left:79.50px;display:block;overflow:hidden;padding-bottom:12px;width:306.70px;-webkit-text-stroke:0.25px #111;">Freisinnig-Demokra</span>
<span class="t" id="t51" style="top:759.07px;font-size:33px;line-height:33px;color:#111;letter-spacing:1.300px;left:395.00px;-webkit-text-stroke:0.25px #111;">FDP</span>
<span class="t" id="t52" style="top:759.07px;font-size:33px;line-height:33px;color:#111;letter-spacing:1.300px;right:905.70px;-webkit-text-stroke:0.25px #111;">33</span>
<span class="t" id="t53" style="top:759.07px;font-size:33px;line-height:33px;color:#111;letter-spacing:1.300px;right:717.70px;-webkit-text-stroke:0.25px #111;">29</span>
<span class="t" id="t54" style="top:812.57px;font-size:33px;line-height:33px;color:#111;letter-spacing:1.500px;left:80.50px;display:block;overflow:hidden;padding-bottom:12px;width:305.70px;-webkit-text-stroke:0.25px #111;">Grüne Partei der Sc</span>
<span class="t" id="t55" style="top:812.57px;font-size:33px;line-height:33px;color:#111;letter-spacing:1.300px;left:395.00px;-webkit-text-stroke:0.25px #111;">GPS</span>
<span class="t" id="t56" style="top:812.57px;font-size:33px;line-height:33px;color:#111;letter-spacing:1.300px;right:905.70px;-webkit-text-stroke:0.25px #111;">11</span>
<span class="t" id="t57" style="top:812.57px;font-size:33px;line-height:33px;color:#111;letter-spacing:1.300px;right:717.70px;-webkit-text-stroke:0.25px #111;">28</span>
<span class="t" id="t58" style="top:866.07px;font-size:33px;line-height:33px;color:#111;letter-spacing:2.306px;left:80.50px;display:block;overflow:hidden;padding-bottom:12px;width:305.70px;-webkit-text-stroke:0.25px #111;">Christdemokratisch</span>
<span class="t" id="t59" style="top:866.07px;font-size:33px;line-height:33px;color:#111;letter-spacing:1.300px;left:395.00px;-webkit-text-stroke:0.25px #111;">CVP</span>
<span class="t" id="t60" style="top:866.07px;font-size:33px;line-height:33px;color:#111;letter-spacing:1.300px;right:905.70px;-webkit-text-stroke:0.25px #111;">27</span>
<span class="t" id="t61" style="top:866.07px;font-size:33px;line-height:33px;color:#111;letter-spacing:1.300px;right:717.70px;-webkit-text-stroke:0.25px #111;">25</span>
<span class="t" id="t62" style="top:919.57px;font-size:33px;line-height:33px;color:#111;letter-spacing:1.794px;left:80.50px;display:block;overflow:hidden;padding-bottom:12px;width:305.70px;-webkit-text-stroke:0.25px #111;">Grünliberale Partei</span>
<span class="t" id="t63" style="top:919.57px;font-size:33px;line-height:33px;color:#111;letter-spacing:1.300px;left:395.00px;-webkit-text-stroke:0.25px #111;">GLP</span>
<span class="t" id="t64" style="top:919.57px;font-size:33px;line-height:33px;color:#111;letter-spacing:1.300px;right:905.70px;-webkit-text-stroke:0.25px #111;">7</span>
<span class="t" id="t65" style="top:919.57px;font-size:33px;line-height:33px;color:#111;letter-spacing:1.300px;right:717.70px;-webkit-text-stroke:0.25px #111;">16</span>
<span class="t" id="t66" style="top:973.07px;font-size:33px;line-height:33px;color:#111;letter-spacing:1.981px;left:79.50px;display:block;overflow:hidden;padding-bottom:12px;width:306.70px;-webkit-text-stroke:0.25px #111;">Bürgerlich-Demokr</span>
<span class="t" id="t67" style="top:973.07px;font-size:33px;line-height:33px;color:#111;letter-spacing:1.300px;left:395.00px;-webkit-text-stroke:0.25px #111;">BDP</span>
<span class="t" id="t68" style="top:973.07px;font-size:33px;line-height:33px;color:#111;letter-spacing:1.300px;right:905.70px;-webkit-text-stroke:0.25px #111;">7</span>
<span class="t" id="t69" style="top:973.07px;font-size:33px;line-height:33px;color:#111;letter-spacing:1.300px;right:717.70px;-webkit-text-stroke:0.25px #111;">3</span>
<span class="t" id="t70" style="top:1026.57px;font-size:33px;line-height:33px;color:#111;letter-spacing:1.300px;left:82.50px;display:block;overflow:hidden;padding-bottom:12px;width:303.70px;-webkit-text-stroke:0.25px #111;">Andere</span>
<span class="t" id="t71" style="top:1026.57px;font-size:33px;line-height:33px;color:#111;letter-spacing:1.300px;left:395.00px;-webkit-text-stroke:0.25px #111;">Andere</span>
<span class="t" id="t72" style="top:1026.57px;font-size:33px;line-height:33px;color:#111;letter-spacing:1.300px;right:905.70px;-webkit-text-stroke:0.25px #111;">7</span>
<span class="t" id="t73" style="top:1026.57px;font-size:33px;line-height:33px;color:#111;letter-spacing:1.300px;right:717.70px;-webkit-text-stroke:0.25px #111;">7</span>
<span class="t" id="t74" style="top:1080.07px;font-size:33px;line-height:33px;color:#111;font-weight:bold;letter-spacing:1.900px;left:395.00px;">Total</span>
<span class="t" id="t75" style="top:1080.07px;font-size:33px;line-height:33px;color:#111;font-weight:bold;letter-spacing:1.900px;right:905.10px;">200</span>
<span class="t" id="t76" style="top:1080.07px;font-size:33px;line-height:33px;color:#111;font-weight:bold;letter-spacing:1.900px;right:717.10px;">200</span>
<span class="t" id="t77" style="top:598.57px;font-size:33px;line-height:33px;color:#111;font-weight:bold;letter-spacing:1.900px;left:980.00px;">Fraktion</span>
<span class="t" id="t78" style="top:254.06px;font-size:31px;line-height:31px;color:#7b7b7b;font-weight:bold;letter-spacing:-0.214px;left:1062.50px;z-index:15;">2D-Säule</span>
<span class="t" id="t79" style="top:453.06px;font-size:31px;line-height:31px;color:#7b7b7b;font-weight:bold;letter-spacing:-0.143px;left:1061.50px;z-index:15;">3D-Säule</span>
<span class="t" id="t80" style="top:651.56px;font-size:31px;line-height:31px;color:#7b7b7b;font-weight:bold;left:1062.50px;z-index:15;">2D-Balken</span>
<span class="t" id="t81" style="top:850.06px;font-size:31px;line-height:31px;color:#7b7b7b;font-weight:bold;left:1062.00px;z-index:15;">3D-Balken</span>
<span class="t" id="t82" style="top:1056.40px;font-size:30px;line-height:30px;color:#6b6b6b;letter-spacing:-0.068px;left:1121.50px;z-index:15;">Weitere Säulendiagramme...</span>

<!-- window edge lines -->
<div class="a" style="left:8px;top:94.7px;width:2.6px;height:1014px;background:#d0d0d0;z-index:30;"></div>
<div class="a" style="left:8px;top:8px;width:1.5px;height:87px;background:#dfe5e1;z-index:30;"></div>
<div class="a" style="left:1609px;top:94.7px;width:3px;height:1014px;background:#cfcdcc;z-index:30;"></div>
<div class="a" style="left:1609px;top:8px;width:3px;height:86.7px;background:linear-gradient(90deg,#1b6b41,#0d5a33);z-index:30;"></div>
<div class="a" style="left:8px;top:1104.3px;width:1604px;height:3.7px;background:linear-gradient(#e2e2e2,#b4b5b5 55%,#a4a6a5);z-index:31;"></div>
</div><!-- /shot -->
<!-- ===== annotation boxes ===== -->
<div class="rbox" style="left:400.6px;top:796.3px;width:380.1px;height:68.9px;border-width:5px;"></div>
<div class="rbox" style="left:325.7px;top:161.1px;width:342.3px;height:68.6px;border-width:5px;"></div>
<div class="rbox" style="left:1030.7px;top:95.9px;width:474.3px;height:70.4px;border-width:6.8px 7.2px;"></div>
<div class="rbox" style="left:1070.7px;top:511.3px;width:474.9px;height:70px;border-width:6px 7.2px;"></div>

<span class="t" id="t83" style="top:842.64px;font-size:25px;line-height:25px;color:#111;letter-spacing:2.360px;left:842.60px;z-index:16;">4. Diagrammtyp wählen</span>
<span class="t" id="t84" style="top:807.44px;font-size:40px;line-height:40px;color:#000;letter-spacing:0.106px;left:414.90px;z-index:25;">1. Daten auswählen</span>
<span class="t" id="t85" style="top:171.54px;font-size:40px;line-height:40px;color:#000;letter-spacing:0.213px;left:339.80px;z-index:25;">2. Menü Einfügen</span>
<span class="t" id="t86" style="top:107.34px;font-size:40px;line-height:40px;color:#000;letter-spacing:0.114px;left:1046.20px;z-index:25;">3. Icon Säulendiagramm</span>
<span class="t" id="t87" style="top:522.44px;font-size:40px;line-height:40px;color:#000;letter-spacing:0.120px;left:1085.80px;z-index:25;">4. Diagrammtyp wählen</span>
</div>
<!-- white page margins -->
<div class="a" style="left:0;top:0;width:8px;height:1118px;background:#fff;z-index:40;"></div>
<div class="a" style="left:0;top:0;width:1620px;height:8.4px;background:#fff;z-index:40;"></div>
</body>
</html>
